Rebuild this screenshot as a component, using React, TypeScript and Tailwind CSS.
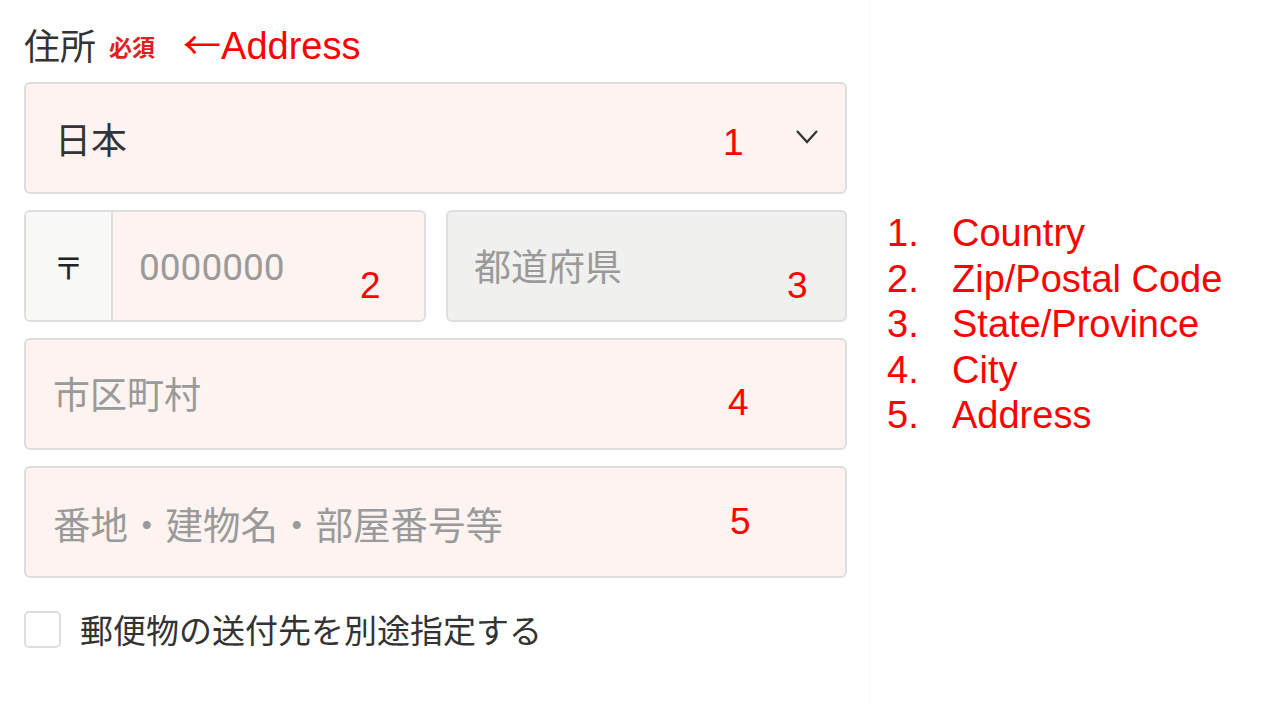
const jp = { fontFamily: '"Noto Sans CJK JP", "Noto Sans", sans-serif' };
const arial = { fontFamily: '"Liberation Sans", Arial, sans-serif' };

function Mark({ n, className }: { n: string; className: string }) {
  return (
    <span className={`absolute text-[37px] leading-none text-[#ff0000] ${className}`} style={arial}>
      {n}
    </span>
  );
}

const legend = ['Country', 'Zip/Postal Code', 'State/Province', 'City', 'Address'];

export default function App() {
  return (
    <div className="flex h-[703px] w-[1280px] bg-white">
      {/* Form */}
      <div className="w-[870px] border-r border-[#fafafa] pl-6 pr-[22px] pt-[24px] pb-[43px]" style={jp}>
        <div className="flex items-center h-[40px]">
          <span className="text-[36px] leading-none text-[#333]">住所</span>
          <span className="ml-[13px] mt-[4px] text-[23px] font-bold leading-none text-[#e02020]">必須</span>
          <span className="ml-[28px] text-[38px] leading-none text-[#ff0000]" style={arial}>
            <span style={jp}>←</span>Address
          </span>
        </div>

        <div className="mt-[18px] flex flex-col gap-4">
          {/* Country */}
          <div className="relative flex h-[112px] items-center rounded-md border-2 border-[#dedede] bg-[#fdf3f1] pl-[29px]">
            <span className="text-[36px] text-[#333]">日本</span>
            <Mark n="1" className="left-[697px] top-[40px]" />
            <svg className="absolute right-[26px] top-[44px]" width="24" height="18" viewBox="0 0 24 18" fill="none">
              <path d="M2 3l10 11L22 3" stroke="#333" strokeWidth="2.2" />
            </svg>
          </div>

          {/* Zip + State */}
          <div className="flex gap-5">
            <div className="relative flex h-[112px] w-[402px] overflow-hidden rounded-md border-2 border-[#dedede] bg-[#fdf3f1]">
              <div className="flex w-[87px] items-center justify-center border-r-2 border-[#dedede] bg-[#f8f8f6] text-[30px] text-[#222]">
                〒
              </div>
              <div className="flex items-center pl-[26px] pt-[4px] text-[37px] text-[#9a9a9a]" style={{ fontFamily: 'Roboto, "Liberation Sans", sans-serif' }}>
                0000000
              </div>
              <Mark n="2" className="left-[334px] top-[55px]" />
            </div>
            <div className="relative flex h-[112px] flex-1 items-center rounded-md border-2 border-[#dedede] bg-[#f0f0ef] pl-[26px]">
              <span className="text-[37px] text-[#9a9a9a]">都道府県</span>
              <Mark n="3" className="left-[339px] top-[55px]" />
            </div>
          </div>

          {/* City */}
          <div className="relative flex h-[112px] items-center rounded-md border-2 border-[#dedede] bg-[#fdf3f1] pl-[27px]">
            <span className="text-[37px] text-[#9a9a9a]">市区町村</span>
            <Mark n="4" className="left-[702px] top-[44px]" />
          </div>

          {/* Address */}
          <div className="relative flex h-[112px] items-center rounded-md border-2 border-[#dedede] bg-[#fdf3f1] pl-[27px]">
            <span className="mt-[2px] text-[37.5px] text-[#9a9a9a]">番地・建物名・部屋番号等</span>
            <Mark n="5" className="left-[704px] top-[35px]" />
          </div>
        </div>

        {/* Checkbox */}
        <label className="mt-[27px] flex items-center">
          <span className="h-[37px] w-[37px] rounded-[5px] border-2 border-[#dedede] bg-white" />
          <span className="ml-[19px] text-[33px] text-[#333]">郵便物の送付先を別途指定する</span>
        </label>
      </div>

      {/* Legend */}
      <ol className="pl-[17px] pt-[211px] text-[38px] leading-[45.5px] text-[#ff0000]" style={arial}>
        {legend.map((item, i) => (
          <li key={item} className="flex">
            <span className="w-[65px]">{i + 1}.</span>
            <span>{item}</span>
          </li>
        ))}
      </ol>
    </div>
  );
}
